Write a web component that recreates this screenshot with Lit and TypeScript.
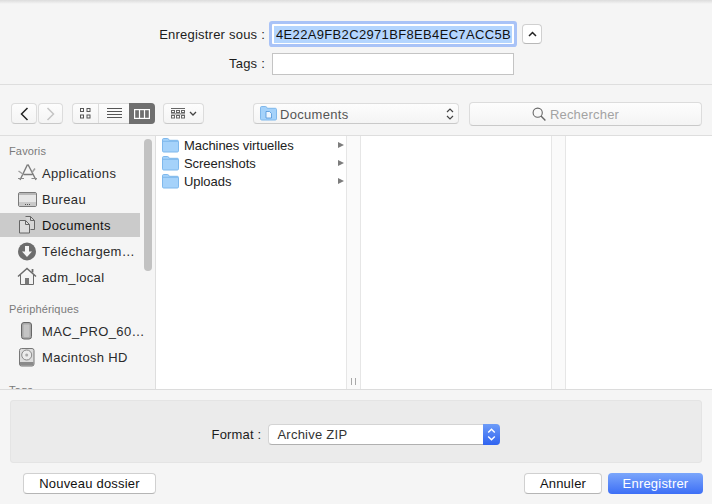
import { LitElement, html, css, svg } from "lit";
import { customElement } from "lit/decorators.js";

const folder = html`<svg class="folder" width="17" height="15" viewBox="0 0 17 15"><path d="M.5 3V1.6C.5 1 1 .5 1.6.5h4c.5 0 .8.2 1 .6l.6 1.2h8.2c.6 0 1.1.5 1.1 1.1v9.5c0 .6-.5 1.1-1.1 1.1H1.6c-.6 0-1.1-.5-1.1-1.1z" fill="#a5d2fa" stroke="#7fb8ec"/><path d="M1 3.3h15" stroke="#7fb8ec" stroke-width="1"/></svg>`;

const icons: Record<string, unknown> = {
  apps: svg`<path d="M11.5 3.5 4 19M12 3.5 20 19M7.5 13.5h9" fill="none" stroke="#7a7a7a" stroke-width="1.4"/><path d="M2 17.5h6M15.5 17.5H21" stroke="#8a8a8a" stroke-width="1.2"/><path d="M2.5 10l5 3.5M19 7.5l-3 4" stroke="#a0a0a0" stroke-width="1.5"/>`,
  desk: svg`<rect x="2.5" y="5.5" width="18" height="14" rx="1.5" fill="#e6e6e6" stroke="#7a7a7a"/><rect x="3" y="6" width="17" height="2" fill="#b8b8b8"/><rect x="3" y="15" width="17" height="4" fill="#c9c9c9"/><path d="M9 17.5h1M11 17.5h1M13 17.5h1" stroke="#555"/>`,
  docs: svg`<path d="M9.5 3.5h5l4 4v9h-4" fill="#d6d6d6" stroke="#666"/><path d="M14.5 3.5v4h4" fill="none" stroke="#666"/><path d="M3.5 7.5h6l4 4v8.5h-10z" fill="#dcdcdc" stroke="#666"/><path d="M9.5 7.5v4h4" fill="none" stroke="#666"/>`,
  down: svg`<circle cx="11" cy="12.5" r="9" fill="#6d6d6d"/><path d="M9 7h4v5.5h3l-5 5.5-5-5.5h3z" fill="#f5f5f5"/>`,
  home: svg`<path d="M2 11.5 11 3.5l9 8" fill="none" stroke="#6a6a6a" stroke-width="1.5"/><path d="M16.5 4v3.5" stroke="#6a6a6a" stroke-width="1.8"/><path d="M4.5 10v9.5h13V10" fill="#f2f2f2" stroke="#6a6a6a"/><rect x="9" y="13" width="4" height="6.5" fill="#777"/>`,
  mac: svg`<rect x="5.5" y="3.5" width="10" height="16.5" rx="2.5" fill="#a8a8a8" stroke="#666"/><rect x="7.5" y="5.5" width="6" height="12.5" rx="1" fill="#c4c4c4"/>`,
  hd: svg`<rect x="3.5" y="3.5" width="14.5" height="17.5" rx="2" fill="#dcdcdc" stroke="#777"/><circle cx="10.7" cy="10" r="5" fill="#ececec" stroke="#8a8a8a"/><circle cx="10.7" cy="10" r="1.5" fill="#aaa"/><rect x="4" y="17" width="13.5" height="3.5" fill="#8a8a8a"/>`,
};

const favs = [
  ["apps", "Applications", false],
  ["desk", "Bureau", false],
  ["docs", "Documents", true],
  ["down", "Téléchargem…", false],
  ["home", "adm_local", false],
] as const;
const devices = [
  ["mac", "MAC_PRO_60…", false],
  ["hd", "Macintosh HD", false],
] as const;

@customElement("app-root")
export class AppRoot extends LitElement {
  static styles = css`
    :host { display: block; width: 712px; height: 504px; font-family: "Liberation Sans", Arial, sans-serif; font-size: 13px; color: #1c1c1c; overflow: hidden; }
    .dialog { height: 504px; display: flex; flex-direction: column; background: #f5f5f5; }
    svg { display: block; flex: none; }

    .head { height: 85px; box-sizing: border-box; flex: none; border-bottom: 1px solid #dedede; padding-top: 24px; display: grid; grid-template-columns: 265px 242px 21px; grid-template-rows: 20px 22px; row-gap: 9px; column-gap: 7px; align-content: start; background: linear-gradient(#dcdcdc, #f5f5f5 4px); }
    .lbl { text-align: right; line-height: 22px; letter-spacing: .22px; white-space: nowrap; }
    .name { background: #fff; box-shadow: 0 0 0 3px #a9c3f7; border-radius: 1px; display: flex; align-items: center; padding: 0 2px 0 2px; overflow: hidden; }
    .name span { flex: 1; background: #b4d5fe; line-height: 17px; letter-spacing: .34px; white-space: nowrap; color: #111; padding-left: 2px; }
    .tags { background: #fff; border: 1px solid #c4c4c4; box-sizing: border-box; }
    .chev { margin-left: 1px; background: #fff; border: 1px solid #d0d0d0; border-bottom-color: #b8b8b8; border-radius: 4px; box-sizing: border-box; display: flex; align-items: center; justify-content: center; }

    .tools { height: 51px; box-sizing: border-box; flex: none; border-bottom: 1px solid #dedede; padding: 18px 10px 0 11px; display: flex; align-items: flex-start; }
    .btn { height: 21px; box-sizing: border-box; background: linear-gradient(#fdfdfd, #f4f4f4); border: 1px solid #dcdcdc; border-bottom-color: #c9c9c9; border-radius: 4px; display: flex; align-items: center; justify-content: center; }
    .back { width: 26px; }
    .fwd { width: 25px; margin-left: 1px; }
    .seg { width: 83px; margin-left: 9px; height: 21px; box-sizing: border-box; display: flex; border: 1px solid #dcdcdc; border-bottom-color: #c9c9c9; border-right: 0; border-radius: 4px; background: linear-gradient(#fdfdfd, #f4f4f4); }
    .seg div { display: flex; align-items: center; justify-content: center; }
    .s1 { width: 25px; border-right: 1px solid #dcdcdc; }
    .s2 { width: 30px; }
    .s3 { flex: 1; background: #6f6f6f; border-radius: 0 4px 4px 0; margin: -1px 0 -1px 0; }
    .arrange { width: 41px; margin-left: 8px; gap: 3px; }
    .path { width: 206px; margin-left: 49px; justify-content: flex-start; padding: 0 4px 0 6px; gap: 3px; color: #555; letter-spacing: .3px; }
    .path span { flex: 1; padding-top: 1px; }
    .search { width: 233px; height: 24px; margin: -1px 0 0 10px; gap: 4px; color: #a3a3a3; letter-spacing: .2px; padding-right: 20px; }

    .browser { height: 253px; flex: none; display: flex; background: #fff; border-bottom: 1px solid #dcdcdc; overflow: hidden; }
    .side { width: 156px; flex: none; box-sizing: border-box; border-right: 1px solid #dedede; background: #f5f5f5; padding-top: 8px; position: relative; overflow: hidden; }
    .thumb { position: absolute; left: 144px; top: 3px; width: 8px; height: 132px; border-radius: 4px; background: #c2c2c2; }
    .sec { height: 14px; line-height: 14px; font-size: 11px; color: #7a7a7a; padding-left: 9px; letter-spacing: .15px; }
    .sec.next { margin-top: 13px; }
    .sec.tagsec { margin-top: 14px; }
    .rows { padding-top: 3px; display: flex; flex-direction: column; gap: 2px; }
    .row { width: 140px; height: 24px; display: flex; align-items: center; gap: 1px; padding-left: 16px; box-sizing: border-box; color: #2b2b2b; white-space: nowrap; letter-spacing: .35px; }
    .row.on { background: #cbcbcb; color: #111; }

    .col { background: #fff; }
    .c1 { width: 190px; box-sizing: border-box; }
    .c2 { width: 190px; }
    .c3 { flex: 1; }
    .gut { width: 13px; flex: none; border: solid #e6e6e6; border-width: 0 1px; background: #fafafa; display: flex; align-items: flex-end; justify-content: center; }
    .grip { width: 3px; height: 7px; margin-bottom: 4px; border: solid #a8a8a8; border-width: 0 1px; }
    .item { height: 18px; display: flex; align-items: center; padding: 0 2px 0 6px; gap: 5px; color: #222; letter-spacing: -.05px; white-space: nowrap; }
    .item span { flex: 1; }
    .tri { width: 0; height: 0; border-left: 6px solid #7d7d7d; border-top: 3.5px solid transparent; border-bottom: 3.5px solid transparent; }

    .foot { flex: 1; padding: 10px 9px 0 10px; display: flex; flex-direction: column; }
    .panel { height: 63px; flex: none; width: 692px; box-sizing: border-box; background: #ebebeb; border: 1px solid #e4e4e4; border-radius: 3px; display: flex; align-items: center; justify-content: center; gap: 7px; padding-top: 5px; }
    .panel .flbl { letter-spacing: .17px; }
    .pop { width: 232px; height: 21px; box-sizing: border-box; display: flex; background: #fff; border: 1px solid #d4d4d4; border-bottom-color: #b0b0b0; border-right: 0; border-radius: 4px; }
    .pop span { flex: 1; padding-left: 8px; line-height: 19px; letter-spacing: .25px; color: #333; }
    .step { width: 17px; margin: -1px 0 -1px; border-radius: 0 4px 4px 0; background: linear-gradient(#6d9cf8, #2f63f0); display: flex; align-items: center; justify-content: center; }
    .acts { display: flex; margin-top: 10px; padding-left: 13px; }
    .act { height: 21px; box-sizing: border-box; background: #fff; border: 1px solid #d0d0d0; border-bottom-color: #b5b5b5; border-radius: 4px; display: flex; align-items: center; justify-content: center; color: #111; letter-spacing: .2px; }
    .new { width: 133px; }
    .cancel { width: 78px; margin-left: auto; }
    .save { width: 95px; margin-left: 6px; border: 0; color: #fff; background: linear-gradient(#7ba6fb, #3d6ff6); }
  `;

  private icon(k: string) {
    return html`<svg width="25" height="24" viewBox="0 0 25 24">${icons[k]}</svg>`;
  }

  private rows(list: readonly (readonly [string, string, boolean])[]) {
    return html`<div class="rows">${list.map(
      ([k, t, on]) => html`<div class="row ${on ? "on" : ""}">${this.icon(k)}<span>${t}</span></div>`
    )}</div>`;
  }

  render() {
    return html`<div class="dialog">
      <div class="head">
        <div class="lbl">Enregistrer sous :</div>
        <div class="name"><span>4E22A9FB2C2971BF8EB4EC7ACC5B</span></div>
        <div class="chev"><svg width="9" height="6" viewBox="0 0 9 6"><path d="M1 5l3.5-3.5L8 5" fill="none" stroke="#222" stroke-width="1.5"/></svg></div>
        <div class="lbl">Tags :</div>
        <div class="tags"></div>
      </div>

      <div class="tools">
        <div class="btn back"><svg width="9" height="14" viewBox="0 0 9 14"><path d="M7.5 1 1.5 7l6 6" fill="none" stroke="#222" stroke-width="1.5"/></svg></div>
        <div class="btn fwd"><svg width="9" height="14" viewBox="0 0 9 14"><path d="M1.5 1l6 6-6 6" fill="none" stroke="#c4c4c4" stroke-width="1.5"/></svg></div>
        <div class="seg">
          <div class="s1"><svg width="11" height="11" viewBox="0 0 11 11" fill="none" stroke="#555"><rect x=".5" y=".5" width="3" height="3"/><rect x="7" y=".5" width="3" height="3"/><rect x=".5" y="7" width="3" height="3"/><rect x="7" y="7" width="3" height="3"/></svg></div>
          <div class="s2"><svg width="15" height="11" viewBox="0 0 15 11" stroke="#555"><path d="M0 .5h15M0 3.5h15M0 6.5h15M0 9.5h15"/></svg></div>
          <div class="s3"><svg width="16" height="10" viewBox="0 0 16 10" fill="none" stroke="#fff" stroke-width="1.2"><rect x=".6" y=".6" width="14.8" height="8.8"/><path d="M5.5 .6v8.8M10.5 .6v8.8"/></svg></div>
        </div>
        <div class="btn arrange">
          <svg width="15" height="11" viewBox="0 0 15 11" fill="none" stroke="#666"><path d="M0 .5h14"/><rect x=".5" y="2.5" width="3" height="2"/><rect x="5.5" y="2.5" width="3" height="2"/><rect x="10.5" y="2.5" width="3" height="2"/><rect x=".5" y="7.5" width="3" height="2.5"/><rect x="5.5" y="7.5" width="3" height="2.5"/><rect x="10.5" y="7.5" width="3" height="2.5"/><path d="M0 5.9h14"/></svg>
          <svg width="8" height="5" viewBox="0 0 8 5"><path d="M1 1l3 3 3-3" fill="none" stroke="#444" stroke-width="1.3"/></svg>
        </div>
        <div class="btn path">
          <svg width="17" height="15" viewBox="0 0 17 15"><path d="M.5 3V1.6C.5 1 1 .5 1.6.5h4c.5 0 .8.2 1 .6l.6 1.2h8.2c.6 0 1.1.5 1.1 1.1v9.5c0 .6-.5 1.1-1.1 1.1H1.6c-.6 0-1.1-.5-1.1-1.1z" fill="#a5d2fa" stroke="#7fb8ec"/><path d="M6 5.5h3.5L11.5 7.5v4.5H6z" fill="#eef6fe" stroke="#4f93d8" stroke-width=".8"/></svg>
          <span>Documents</span>
          <svg width="8" height="14" viewBox="0 0 8 14"><path d="M1 5l3-3 3 3M1 9l3 3 3-3" fill="none" stroke="#444" stroke-width="1.2"/></svg>
        </div>
        <div class="btn search">
          <svg width="14" height="14" viewBox="0 0 14 14" fill="none" stroke="#666" stroke-width="1.1"><circle cx="5.7" cy="5.7" r="4.6"/><path d="M9 9l4.4 4.4" stroke-width="1.4"/></svg>
          <div>Rechercher</div>
        </div>
      </div>

      <div class="browser">
        <div class="side">
          <div class="sec">Favoris</div>
          ${this.rows(favs)}
          <div class="sec next">Périphériques</div>
          ${this.rows(devices)}
          <div class="sec tagsec">Tags</div>
          <div class="thumb"></div>
        </div>
        <div class="col c1">
          ${["Machines virtuelles", "Screenshots", "Uploads"].map(
            (t) => html`<div class="item">${folder}<span>${t}</span><div class="tri"></div></div>`
          )}
        </div>
        <div class="gut"><div class="grip"></div></div>
        <div class="col c2"></div>
        <div class="gut"></div>
        <div class="col c3"></div>
      </div>

      <div class="foot">
        <div class="panel">
          <div class="flbl">Format :</div>
          <div class="pop">
            <span>Archive ZIP</span>
            <div class="step"><svg width="9" height="15" viewBox="0 0 9 15"><path d="M1.2 5.5 4.5 2.2l3.3 3.3M1.2 9.5l3.3 3.3 3.3-3.3" fill="none" stroke="#fff" stroke-width="1.4"/></svg></div>
          </div>
        </div>
        <div class="acts">
          <div class="act new">Nouveau dossier</div>
          <div class="act cancel">Annuler</div>
          <div class="act save">Enregistrer</div>
        </div>
      </div>
    </div>`;
  }
}
